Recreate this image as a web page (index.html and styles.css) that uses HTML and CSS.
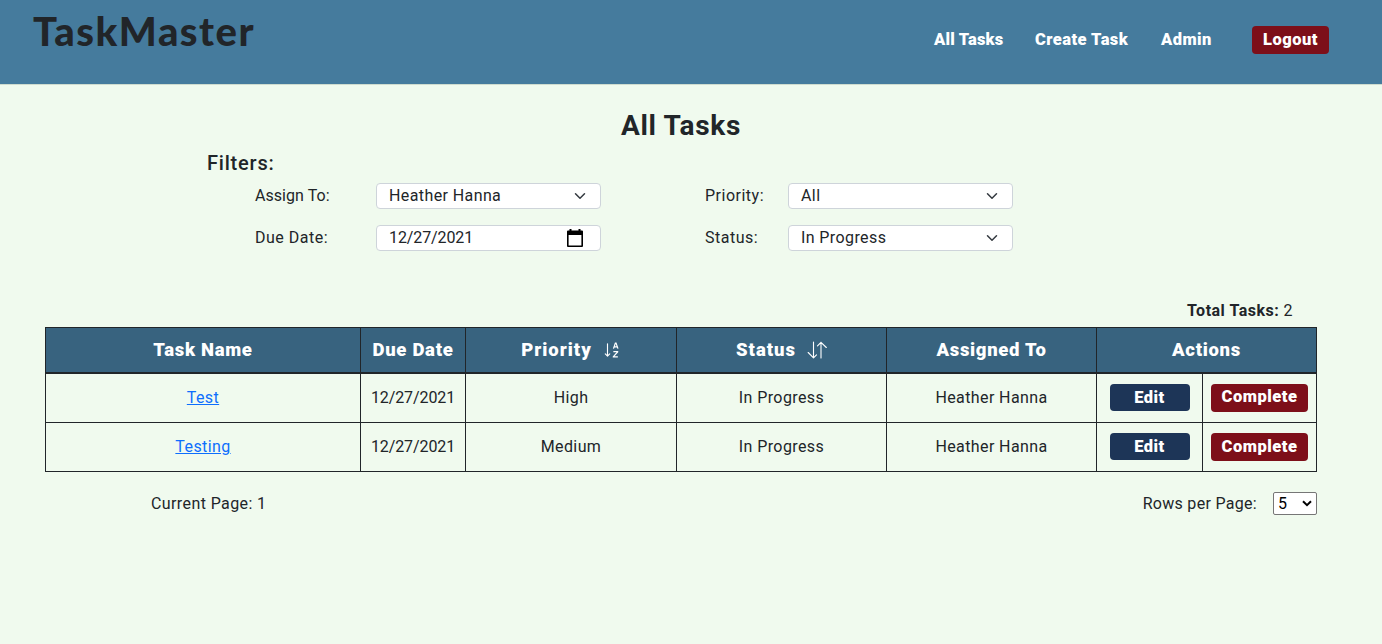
FILE: index.html
```html
<!DOCTYPE html>
<html lang="en">
<head>
<meta charset="utf-8">
<title>TaskMaster</title>
<link rel="stylesheet" href="styles.css">
</head>
<body>
<header class="topbar">
  <div class="brand">TaskMaster</div>
  <nav class="nav">
    <a class="nav-link nav-all">All Tasks</a>
    <a class="nav-link nav-create">Create Task</a>
    <a class="nav-link nav-admin">Admin</a>
    <button class="btn btn-red logout">Logout</button>
  </nav>
</header>
<main class="page">
  <h1 class="title">All Tasks</h1>
  <section class="filters">
    <h2 class="filters-title">Filters:</h2>
    <div class="filter-grid">
      <span class="label label-assign">Assign To:</span>
      <div class="field"><span>Heather Hanna</span><svg class="chevron" viewBox="0 0 16 16"><path d="M2 5l6 6 6-6"/></svg></div>
      <span class="label">Priority:</span>
      <div class="field"><span>All</span><svg class="chevron" viewBox="0 0 16 16"><path d="M2 5l6 6 6-6"/></svg></div>
      <span class="label">Due Date:</span>
      <div class="field field-date"><span class="date">12/27/2021</span><svg class="calendar" viewBox="0 0 18 18"><path d="M2 1.5h14a1 1 0 0 1 1 1V17a1 1 0 0 1-1 1H2a1 1 0 0 1-1-1V2.500a1 1 0 0 1 1-1zM2.600 6v10.400h12.800V6z" fill-rule="evenodd"/><path d="M3.500 0h2v2h-2zM12.500 0h2v2h-2z"/></svg></div>
      <span class="label">Status:</span>
      <div class="field"><span>In Progress</span><svg class="chevron" viewBox="0 0 16 16"><path d="M2 5l6 6 6-6"/></svg></div>
    </div>
  </section>
  <p class="total"><b>Total Tasks:</b> <span>2</span></p>
  <table class="tasks">
    <colgroup><col class="c-name"><col class="c-due"><col class="c-mid"><col class="c-status"><col class="c-status"><col class="c-edit"><col class="c-done"></colgroup>
    <thead>
      <tr>
        <th>Task Name</th>
        <th>Due Date</th>
        <th><div class="sort">Priority
          <svg class="icon-az" viewBox="0 0 16 16"><path d="M4.500 2.500a.5.5 0 0 0-1 0v9.793l-1.146-1.147a.5.5 0 0 0-.708.708l2 1.999a.5.5 0 0 0 .708 0l2-2a.5.500 0 0 0-.708-.707L4.500 12.293z"/><path class="az" d="M9.300 6.800l1.700-4.900h.6l1.700 4.900M9.900 5.200h2.800M9.200 9.500h3.800v.2L9.200 13.900v.2h4"/></svg></div></th>
        <th><div class="sort">Status
          <svg class="icon-updown" viewBox="0 0 20 18"><path d="M6.500 1v15.700M1.200 11.500l5.300 5.300 3-3M14 17V1.300M10.500 4.800L14 1.300l5.300 5.200"/></svg></div></th>
        <th>Assigned To</th>
        <th colspan="2">Actions</th>
      </tr>
    </thead>
    <tbody>
      <tr>
        <td><a class="link">Test</a></td><td class="date">12/27/2021</td><td>High</td><td>In Progress</td><td>Heather Hanna</td>
        <td><button class="btn btn-navy">Edit</button></td><td><button class="btn btn-red">Complete</button></td>
      </tr>
      <tr>
        <td><a class="link">Testing</a></td><td class="date">12/27/2021</td><td>Medium</td><td>In Progress</td><td>Heather Hanna</td>
        <td><button class="btn btn-navy">Edit</button></td><td><button class="btn btn-red">Complete</button></td>
      </tr>
    </tbody>
  </table>
  <footer class="pager">
    <span class="current">Current Page: 1</span>
    <div class="rows"><span class="rows-label">Rows per Page:</span>
      <div class="rows-select"><span class="rows-value">5</span><svg class="caret" viewBox="0 0 10 7"><path d="M1 1.200l4 4 4-4"/></svg></div>
    </div>
  </footer>
</main>
</body>
</html>
```

FILE: styles.css
```css
* { box-sizing: border-box; }
body {
  margin: 0;
  min-height: 644px;
  background: #f0faee;
  color: #212529;
  font: 400 16px/24px Roboto, "Open Sans", sans-serif;
  letter-spacing: 0.4px;
  white-space: nowrap;
}
.topbar {
  display: flex;
  justify-content: space-between;
  height: 85px;
  padding: 0 53px 0 33px;
  background: #457b9d;
  border-bottom: 1px solid #cfdccf;
}
.brand {
  padding-top: 7px;
  font: 900 40px/48px Lato, sans-serif;
  letter-spacing: 1.5px;
}
.nav {
  display: flex;
  align-items: center;
  height: 80px;
  color: #fff;
  font-size: 16.5px;
  font-weight: 900;
  letter-spacing: 0.45px;
}
.nav-all { width: 101px; letter-spacing: 0.2px; }
.nav-create { width: 126px; }
.nav-admin { width: 91px; }
.btn {
  display: block;
  height: 28px;
  margin: 0 auto;
  padding: 0 0 1px;
  border: 0;
  border-radius: 4px;
  color: #fff;
  font: 900 16.5px/26px Roboto, sans-serif;
  letter-spacing: 0.5px;
}
.btn-red { width: 97px; background: #7d0f19; }
.btn-navy { width: 80px; height: 27px; margin-bottom: 1px; padding: 1px 0 0; background: #1d3557; }
.logout { width: 77px; }
.page { padding: 24px 65px 0 45px; }
.title {
  margin: 0;
  font: 700 28px/34px Roboto, sans-serif;
  letter-spacing: 0.7px;
  text-align: center;
}
.filters { padding-left: 162px; }
.filters-title {
  margin: 8px 0;
  font: 500 20px/24px Roboto, sans-serif;
  letter-spacing: 0.8px;
}
.filter-grid {
  display: grid;
  grid-template-columns: 121px 329px 83px 225px;
  row-gap: 16px;
  padding-left: 48px;
}
.label { line-height: 26px; letter-spacing: 0.5px; }
.label-assign { letter-spacing: 0.05px; }
.date { letter-spacing: -0.1px; }
.field {
  display: flex;
  align-items: center;
  justify-content: space-between;
  width: 225px;
  height: 26px;
  padding: 0 14px 0 12px;
  border: 1px solid #ced4da;
  border-radius: 4px;
  background: #fff;
}
.field-date { padding-right: 16px; }
.chevron { width: 12px; height: 12px; fill: none; stroke: #343a40; stroke-width: 2; stroke-linecap: round; stroke-linejoin: round; }
.calendar { width: 18px; height: 18px; fill: #000; }
.total { margin: 48px 24px 4px 0; text-align: right; }
.total b { letter-spacing: 0.5px; }
.tasks { width: 1272px; border-collapse: collapse; table-layout: fixed; text-align: center; }
.c-name { width: 315px; }
.c-due { width: 105px; }
.c-mid { width: 211px; }
.c-status { width: 210px; }
.c-edit { width: 106px; }
.c-done { width: 114px; }
.tasks th, .tasks td { padding: 0; border: 1px solid #212529; }
.tasks th {
  height: 45px;
  border-bottom-width: 2px;
  background: #38637f;
  color: #fff;
  font-size: 18.5px;
  font-weight: 900;
  letter-spacing: 0.7px;
}
.tasks td { height: 49px; }
.tasks tbody tr:first-child td { height: 50px; }
.sort { display: flex; align-items: center; justify-content: center; gap: 11px; letter-spacing: 1px; }
.icon-az { width: 18px; height: 18px; fill: #fff; }
.az { fill: none; stroke: #fff; stroke-width: 1.1; }
.icon-updown { width: 20px; height: 18px; fill: none; stroke: #fff; stroke-width: 1.1; stroke-linecap: round; stroke-linejoin: round; }
.link { color: #0d6efd; text-decoration: underline; }
.pager { display: flex; justify-content: space-between; align-items: center; width: 1272px; padding: 20px 0 0 106px; letter-spacing: 0.3px; }
.current { letter-spacing: 0.4px; }
.rows { display: flex; align-items: center; gap: 16px; }
.rows-select {
  display: flex;
  align-items: center;
  justify-content: space-between;
  width: 44px;
  height: 23px;
  margin: -1px 0 1px;
  padding: 0 4px;
  border: 1px solid #767676;
  border-radius: 2px;
  background: #fff;
  color: #000;
}
.rows-value { padding-top: 1px; }
.caret { width: 10px; height: 7px; fill: none; stroke: #000; stroke-width: 2; }
```
